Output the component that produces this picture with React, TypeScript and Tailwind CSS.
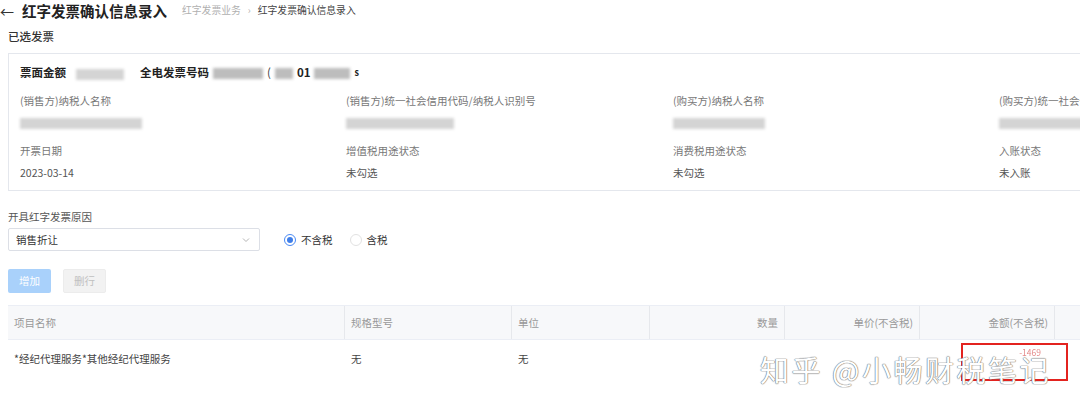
import React from 'react';

const font = { fontFamily: '"Noto Sans CJK SC", "Noto Sans", sans-serif' };

const Blur = ({ w, dark = false }: { w: number; dark?: boolean }) => (
  <span
    className={`inline-block h-[11px] align-middle blur-[1.5px] ${dark ? 'bg-[#bdbdbd]' : 'bg-[#d4d4d4]'}`}
    style={{ width: w }}
  />
);

const InfoCell = ({ label, value }: { label: string; value: React.ReactNode }) => (
  <div className="flex flex-col">
    <div className="h-[18px] flex items-center text-[10.5px] text-[#777] whitespace-nowrap">{label}</div>
    <div className="h-[26px] flex items-center text-[10.5px] text-[#555]">{value}</div>
  </div>
);

const App: React.FC = () => {
  const cols = [
    { name: '项目名称', w: 'w-[337px]', align: 'justify-start' },
    { name: '规格型号', w: 'w-[167px]', align: 'justify-start' },
    { name: '单位', w: 'w-[138px]', align: 'justify-start' },
    { name: '数量', w: 'w-[135px]', align: 'justify-end' },
    { name: '单价(不含税)', w: 'w-[135px]', align: 'justify-end' },
    { name: '金额(不含税)', w: 'w-[135px]', align: 'justify-end' },
  ];

  return (
    <div className="w-[1080px] h-[412px] overflow-hidden bg-white relative" style={font}>
      {/* Header */}
      <div className="h-[22px] flex items-center">
        <span className="text-[14px] text-[#333] leading-none">←</span>
        <h1 className="ml-[8px] text-[14.5px] font-bold text-[#222] leading-none">红字发票确认信息录入</h1>
        <div className="ml-[15px] flex items-center text-[9.8px] leading-none">
          <span className="text-[#b0b0b0]">红字发票业务</span>
          <span className="mx-[7px] text-[#b0b0b0]">›</span>
          <span className="text-[#444]">红字发票确认信息录入</span>
        </div>
      </div>

      <div className="mt-[7px] ml-[8px] h-[16px] flex items-center text-[11.5px] font-medium text-[#333]">已选发票</div>

      {/* Invoice card */}
      <div className="mt-[8px] ml-[8px] w-[1100px] h-[138px] border border-[#e4e7ed] pl-[11px]">
        <div className="h-[38px] flex items-center text-[11.5px] font-bold text-[#222]">
          <span>票面金额</span>
          <span className="ml-[10px]"><Blur w={48} /></span>
          <span className="ml-[16px]">全电发票号码</span>
          <span className="ml-[4px] flex items-center gap-[4px]">
            <Blur w={50} dark />
            <span className="text-[#444] font-normal">(</span>
            <Blur w={18} dark />
            <span>01</span>
            <Blur w={36} dark />
            <span className="text-[9px]">s</span>
          </span>
        </div>
        <div className="grid grid-cols-[326px_327px_326px_326px]">
          <InfoCell label="(销售方)纳税人名称" value={<Blur w={122} />} />
          <InfoCell label="(销售方)统一社会信用代码/纳税人识别号" value={<Blur w={108} />} />
          <InfoCell label="(购买方)纳税人名称" value={<Blur w={92} />} />
          <InfoCell label="(购买方)统一社会信用代码/纳税人识别号" value={<Blur w={90} />} />
        </div>
        <div className="mt-[6px] grid grid-cols-[326px_327px_326px_326px]">
          <InfoCell label="开票日期" value="2023-03-14" />
          <InfoCell label="增值税用途状态" value="未勾选" />
          <InfoCell label="消费税用途状态" value="未勾选" />
          <InfoCell label="入账状态" value="未入账" />
        </div>
      </div>

      {/* Reason */}
      <div className="mt-[19px] ml-[8px] h-[14px] flex items-center text-[10.5px] text-[#555]">开具红字发票原因</div>
      <div className="mt-[4px] ml-[8px] flex items-center">
        <div className="w-[252px] h-[23px] border border-[#dcdfe6] rounded-[2px] flex items-center justify-between px-[7px]">
          <span className="text-[10.5px] text-[#333]">销售折让</span>
          <svg width="8" height="6" viewBox="0 0 8 6" className="mr-[2px]">
            <path d="M1 1.5 L4 4.5 L7 1.5" fill="none" stroke="#b4b4b4" strokeWidth="1" />
          </svg>
        </div>
        <label className="ml-[24px] flex items-center gap-[5px] text-[10.5px] text-[#333]">
          <span className="w-[12px] h-[12px] rounded-full border border-[#4a8af4] flex items-center justify-center">
            <span className="w-[6px] h-[6px] rounded-full bg-[#3f7ee8]" />
          </span>
          不含税
        </label>
        <label className="ml-[17px] flex items-center gap-[5px] text-[10.5px] text-[#333]">
          <span className="w-[12px] h-[12px] rounded-full border border-[#e2e2e2]" />
          含税
        </label>
      </div>

      {/* Buttons */}
      <div className="mt-[18px] ml-[8px] flex gap-[12px]">
        <button className="w-[43px] h-[24px] rounded-[2px] bg-[#a9d1fb] text-white text-[10.5px]">增加</button>
        <button className="w-[43px] h-[24px] rounded-[2px] bg-[#f2f2f2] border border-[#ececec] text-[#c0c0c0] text-[10.5px]">删行</button>
      </div>

      {/* Table */}
      <div className="mt-[12px] ml-[8px] w-[1100px]">
        <div className="h-[35px] flex bg-[#f7f8fa] border-t border-b border-[#ebeef5]">
          {cols.map((c) => (
            <div key={c.name} className={`${c.w} h-full flex items-center ${c.align} px-[6px] border-r border-[#e6e8ec] text-[10.5px] text-[#999]`}>
              {c.name}
            </div>
          ))}
          <div className="flex-1" />
        </div>
        <div className="h-[38px] flex">
          <div className="w-[337px] flex items-center px-[6px] text-[10.5px] text-[#444]">*经纪代理服务*其他经纪代理服务</div>
          <div className="w-[167px] flex items-center px-[6px] text-[10.5px] text-[#444]">无</div>
          <div className="w-[138px] flex items-center px-[6px] text-[10.5px] text-[#444]">无</div>
          <div className="w-[135px]" />
          <div className="w-[135px]" />
          <div className="w-[135px] flex items-start justify-end pt-[8px] pr-[14px]">
            <span className="relative z-10 text-[8.5px] leading-none text-[#e58a8a] blur-[0.5px]">-1469</span>
          </div>
        </div>
      </div>

      {/* Red annotation box */}
      <div className="absolute left-[961px] top-[343px] w-[107px] h-[38px] border-2 border-[#e3231f]" />

      {/* Watermark */}
      <div className="absolute left-[760px] top-[355px] text-[29px] leading-none text-white tracking-[2.5px] [text-shadow:0_0_1px_#777,0_0_1px_#777,0_0_1px_#777] select-none pointer-events-none">
        知乎 @小畅财税笔记
      </div>
    </div>
  );
};

export default App;
